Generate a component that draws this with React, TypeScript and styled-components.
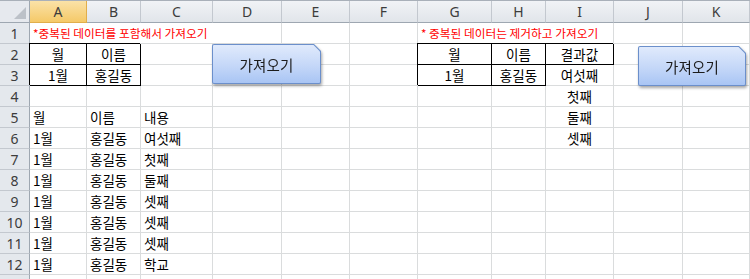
import React from "react";
import styled, { createGlobalStyle, css } from "styled-components";

const GlobalStyle = createGlobalStyle`
  html, body {
    margin: 0;
    padding: 0;
    background: #fff;
    overflow: hidden;
  }
`;

const GRID = "#dadcdd";
const HEAD_LINE = "#c3c8cf";
const CJK = `"Noto Sans CJK KR", "Noto Sans", sans-serif`;

const Sheet = styled.div`
  position: relative;
  display: grid;
  grid-template-columns: 30px 57px 54px 72px 69px 68px 68px 74px 54px 68px 69px 1fr;
  grid-template-rows: 22px;
  grid-auto-rows: 21px;
  width: 750px;
  height: 279px;
  overflow: hidden;
  font-family: ${CJK};
  border-top: 1px solid #a9b0b9;
  box-sizing: border-box;
`;

const headBase = css`
  box-sizing: border-box;
  display: flex;
  align-items: center;
  justify-content: center;
  font-family: "Noto Sans", "Liberation Sans", sans-serif;
  font-size: 14px;
  color: #3c3c3c;
  border-right: 1px solid ${HEAD_LINE};
  border-bottom: 1px solid ${HEAD_LINE};
`;

const Corner = styled.div`
  ${headBase};
  position: relative;
  background: #e6e9ee;
  border-bottom-color: #9ea7b1;
  border-right-color: #9ea7b1;
  &::after {
    content: "";
    position: absolute;
    right: 3px;
    bottom: 3px;
    width: 0;
    height: 0;
    border-left: 12px solid transparent;
    border-bottom: 12px solid #bcc1c8;
  }
`;

const ColHeader = styled.div<{ $active?: boolean }>`
  ${headBase};
  border-bottom-color: #9ea7b1;
  background: ${(p) =>
    p.$active
      ? "linear-gradient(#fae2a8, #f5c968)"
      : "linear-gradient(#f1f3f6, #e1e5ea)"};
  ${(p) => p.$active && "border-right-color: #e1ae4b; border-bottom-color: #e1ae4b;"}
`;

const RowHeader = styled.div`
  ${headBase};
  background: #e4e8ed;
  border-right-color: #9ea7b1;
`;

type Align = "left" | "center";

const Cell = styled.div<{ $align?: Align; $boxed?: boolean; $span?: number; $red?: boolean }>`
  box-sizing: border-box;
  border-right: 1px solid ${GRID};
  border-bottom: 1px solid ${GRID};
  padding: 0 3px;
  font-size: ${(p) => (p.$red ? "11.7px" : "13.5px")};
  line-height: 20px;
  color: ${(p) => (p.$red ? "#ff0000" : "#000")};
  white-space: nowrap;
  text-align: ${(p) => p.$align ?? "left"};
  grid-column: ${(p) => (p.$span ? `span ${p.$span}` : "auto")};
  ${(p) =>
    p.$boxed &&
    css`
      border-right-color: #000;
      border-bottom-color: #000;
      box-shadow: -1px -1px 0 0 #000;
    `}
`;

const ShapeShadow = styled.div<{ $left: number; $top: number; $w: number }>`
  position: absolute;
  left: ${(p) => p.$left}px;
  top: ${(p) => p.$top}px;
  width: ${(p) => p.$w}px;
  height: 40px;
  filter: drop-shadow(1px 2px 1.5px rgba(0, 0, 0, 0.35));
`;

const ShapeFrame = styled.div`
  width: 100%;
  height: 100%;
  padding: 1px;
  box-sizing: border-box;
  background: #6b8fcb;
  border-radius: 2px;
  clip-path: polygon(0 0, calc(100% - 7px) 0, 100% 7px, 100% 100%, 0 100%);
`;

const ShapeFace = styled.div`
  width: 100%;
  height: 100%;
  display: flex;
  align-items: center;
  justify-content: center;
  border-radius: 1px;
  background: linear-gradient(#e0eafc, #c4d7f8 55%, #a9c5f4);
  clip-path: polygon(0 0, calc(100% - 6.5px) 0, 100% 6.5px, 100% 100%, 0 100%);
  font-family: ${CJK};
  font-size: 14.5px;
  color: #1c1c1c;
  letter-spacing: 0.2px;
`;

const ShapeButton = ({ left, top, width, label }: { left: number; top: number; width: number; label: string }) => (
  <ShapeShadow $left={left} $top={top} $w={width}>
    <ShapeFrame>
      <ShapeFace>{label}</ShapeFace>
    </ShapeFrame>
  </ShapeShadow>
);

const COLS = ["A", "B", "C", "D", "E", "F", "G", "H", "I", "J", "K"];

interface CellSpec {
  text?: string;
  align?: Align;
  boxed?: boolean;
  span?: number;
  red?: boolean;
}

const c = (text?: string, extra: Partial<CellSpec> = {}): CellSpec => ({ text, ...extra });
const box = (text: string) => c(text, { boxed: true, align: "center" });
const mid = (text: string) => c(text, { align: "center" });

const pad = (cells: CellSpec[]) => {
  const used = cells.reduce((n, s) => n + (s.span ?? 1), 0);
  return [...cells, ...Array.from({ length: COLS.length - used }, () => c())];
};

const listRow = (word: string, res?: string) =>
  pad([c("1월"), c("홍길동"), c(word), c(), c(), c(), c(), c(), res ? mid(res) : c()]);

const rows: CellSpec[][] = [
  pad([
    c("*중복된 데이터를 포함해서 가져오기", { span: 4, red: true }),
    c(),
    c(),
    c("* 중복된 데이터는 제거하고 가져오기", { span: 3, red: true }),
  ]),
  pad([box("월"), box("이름"), c(), c(), c(), c(), box("월"), box("이름"), box("결과값")]),
  pad([box("1월"), box("홍길동"), c(), c(), c(), c(), box("1월"), box("홍길동"), mid("여섯째")]),
  pad([c(), c(), c(), c(), c(), c(), c(), c(), mid("첫째")]),
  pad([c("월"), c("이름"), c("내용"), c(), c(), c(), c(), c(), mid("둘째")]),
  listRow("여섯째", "셋째"),
  listRow("첫째"),
  listRow("둘째"),
  listRow("셋째"),
  listRow("셋째"),
  listRow("셋째"),
  listRow("학교"),
  pad([]),
];

export default function App() {
  return (
    <>
      <GlobalStyle />
      <Sheet>
        <Corner />
        {COLS.map((col) => (
          <ColHeader key={col} $active={col === "A"}>
            {col}
          </ColHeader>
        ))}
        {rows.map((row, r) => (
          <React.Fragment key={r}>
            <RowHeader>{r + 1}</RowHeader>
            {row.map((cell, i) => (
              <Cell
                key={i}
                $align={cell.align}
                $boxed={cell.boxed}
                $span={cell.span}
                $red={cell.red}
              >
                {cell.text}
              </Cell>
            ))}
          </React.Fragment>
        ))}
        <ShapeButton left={212} top={43} width={109} label="가져오기" />
        <ShapeButton left={638} top={45} width={108} label="가져오기" />
      </Sheet>
    </>
  );
}
